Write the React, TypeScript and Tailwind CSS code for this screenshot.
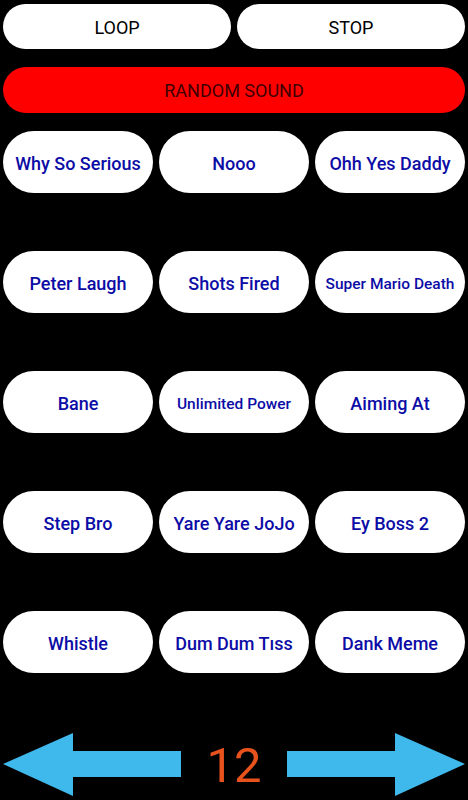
import React from "react";

const sounds: string[][] = [
  ["Why So Serious", "Nooo", "Ohh Yes Daddy"],
  ["Peter Laugh", "Shots Fired", "Super Mario Death"],
  ["Bane", "Unlimited Power", "Aiming At"],
  ["Step Bro", "Yare Yare JoJo", "Ey Boss 2"],
  ["Whistle", "Dum Dum Tıss", "Dank Meme"],
];

// labels that the app shrinks to fit the pill
const small = new Set(["Super Mario Death", "Unlimited Power"]);

function Arrow({ flip }: { flip?: boolean }) {
  return (
    <svg width="178" height="64" viewBox="0 0 178 64" className={flip ? "-scale-x-100" : ""}>
      <path d="M0 31 L70 0 L70 18 L178 18 L178 44 L70 44 L70 63 Z" fill="#3fb9ec" />
    </svg>
  );
}

export default function App() {
  return (
    <div className="min-h-[800px] bg-black px-[3px] pt-[4px] font-['Roboto','Liberation_Sans',sans-serif]">
      {/* top controls */}
      <div className="flex gap-[6px]">
        <button className="h-[45px] flex-1 rounded-full bg-white pt-px text-[18px] text-black">LOOP</button>
        <button className="h-[45px] flex-1 rounded-full bg-white pt-px text-[18px] text-black">STOP</button>
      </div>
      <button className="mt-[18px] h-[46px] w-full rounded-full bg-[#ff0000] pt-px text-[18px] text-[#400000]">
        RANDOM SOUND
      </button>

      {/* sound board */}
      <div className="mt-[18px] flex flex-col gap-[58px]">
        {sounds.map((row, i) => (
          <div key={i} className="grid grid-cols-3 gap-[6px]">
            {row.map(name => (
              <button
                key={name}
                className={`h-[62px] rounded-full bg-white font-medium text-[#0c0ca6] ${small.has(name) ? "pt-[5px] text-[15.5px]" : "pt-[2px] text-[18px]"}`}
              >
                {name}
              </button>
            ))}
          </div>
        ))}
      </div>

      {/* pager */}
      <div className="mt-[60px] flex items-center justify-between">
        <Arrow />
        <span className="text-[49px] leading-none text-[#e8521c]">12</span>
        <Arrow flip />
      </div>
    </div>
  );
}
